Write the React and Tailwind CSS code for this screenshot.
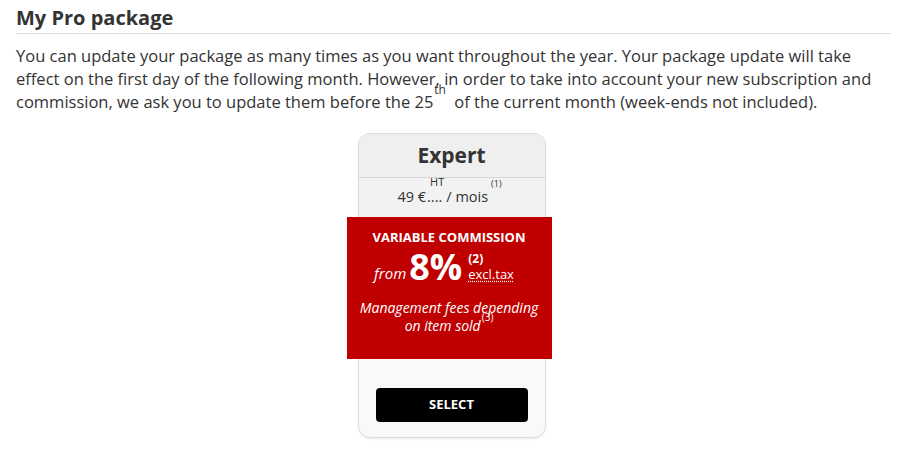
const App = () => {
  return (
    <div className="min-h-[449px] bg-white px-4 pt-[5px] text-[#333] font-['Open_Sans',sans-serif]">
      {/* Title */}
      <h2 className="mr-[2px] border-b border-[#dcdcdc] pb-[3px] text-[20px] font-bold leading-[25px] text-[#333]">
        My Pro package
      </h2>

      <p className="mt-[10px] text-[16.5px] leading-[23px] text-[#333]">
        You can update your package as many times as you want throughout the year. Your package update will take effect on the first
        day of the following month. However, in order to take into account your new subscription and commission, we ask you to
        update them before the 25
        <sup className="relative top-[-14px] ml-[1px] mr-[4px] text-[12px]">th</sup> of the current month (week-ends not included).
      </p>

      {/* Package card */}
      <div className="mt-[20px] flex justify-center pr-[6px]">
        <div className="w-[188px] rounded-[12px] border border-[#dcdcdc] bg-[#f9f9f9] shadow-[0_1px_2px_rgba(0,0,0,0.08)]">
          <div className="flex h-[44px] items-center justify-center rounded-t-[12px] border-b border-[#d6d6d6] bg-[#efefef]">
            <span className="text-[21px] font-bold text-[#333]">Expert</span>
          </div>

          <div className="flex h-[39px] items-start justify-center bg-[#f2f2f2] pt-[8px] pr-[4px] text-[14.5px] text-[#333]">
            <span>49 €</span>
            <span className="relative ml-[1px]">
              <span className="absolute left-[3px] top-[-10px] text-[11px] leading-none">HT</span>
              ....
            </span>
            <span className="ml-[4px]">/ mois</span>
            <span className="relative top-[-9px] ml-[3px] text-[9px]">(1)</span>
          </div>

          {/* Commission block */}
          <div className="ml-[-12px] flex h-[142px] w-[205px] flex-col items-center bg-[#c00000] pt-[11px] text-white">
            <span className="text-[13px] font-bold leading-[18px]">VARIABLE COMMISSION</span>
            <div className="mt-[3px] flex items-end pr-[10px] leading-none">
              <span className="mb-[4px] text-[15px] italic">from</span>
              <span className="ml-[3px] text-[36px] font-bold">8%</span>
              <span className="ml-[6px] flex flex-col items-start">
                <span className="text-[12px] font-bold">(2)</span>
                <span className="mb-[4px] mt-[3px] text-[13px] underline decoration-dotted underline-offset-2">excl.tax</span>
              </span>
            </div>
            <p className="mt-[14px] text-center text-[14px] italic leading-[18px]">
              Management fees depending
              <br />
              on item sold
              <sup className="relative top-[-10px] ml-[1px] text-[10px] not-italic">(3)</sup>
            </p>
          </div>

          <div className="flex justify-center pb-[15px] pt-[29px]">
            <button className="h-[34px] w-[152px] rounded-[4px] bg-black text-[13px] font-bold text-white">SELECT</button>
          </div>
        </div>
      </div>
    </div>
  );
};

export default App;
